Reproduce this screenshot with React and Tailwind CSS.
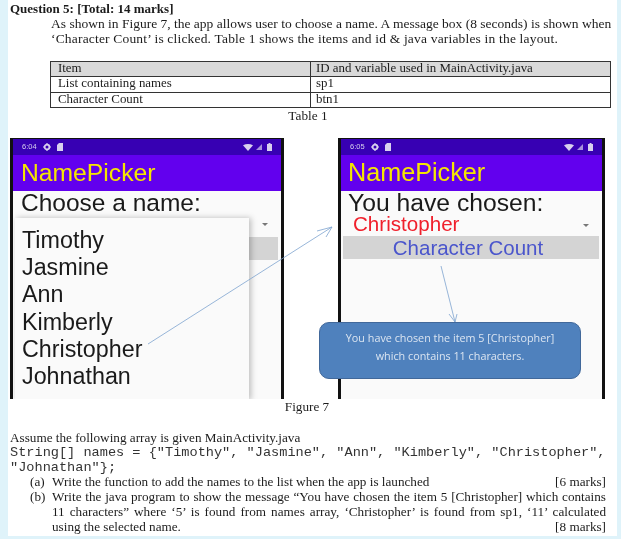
const serif = "font-['Liberation_Serif',serif]";
const sans = "font-['Liberation_Sans',Arial,sans-serif]";
const mono = "font-['Liberation_Mono',monospace]";
const justifyLine = "whitespace-nowrap text-justify [text-align-last:justify]";

const StatusBar = ({ time }) => (
  <div className="h-[16px] shrink-0 bg-[#3700b3] flex items-center justify-between pl-[9px] pr-[9px] text-[#d8d0ee]">
    <div className="flex items-center gap-[6px]">
      <span className={`${sans} text-[7.5px] leading-none`}>{time}</span>
      <svg width="8" height="8" viewBox="0 0 8 8">
        <circle cx="4" cy="4" r="2.4" fill="none" stroke="currentColor" strokeWidth="1.8" />
        <path d="M4 0v1.5M4 6.5V8M0 4h1.5M6.5 4H8" stroke="currentColor" strokeWidth="1.2" />
      </svg>
      <svg width="6" height="8" viewBox="0 0 6 8">
        <path d="M2 0h4v8H0V2z" fill="currentColor" />
      </svg>
    </div>
    <div className="flex items-center gap-[3px]">
      <svg width="10" height="7" viewBox="0 0 10 7">
        <path d="M0 1.2Q5-1.2 10 1.2L5 7z" fill="currentColor" />
      </svg>
      <svg width="6" height="6" viewBox="0 0 6 6">
        <path d="M6 0v6H0z" fill="currentColor" opacity="0.7" />
      </svg>
      <svg width="5" height="8" viewBox="0 0 5 8" className="ml-[2px]">
        <path d="M1.5 0h2v1H5v7H0V1h1.5z" fill="currentColor" />
      </svg>
    </div>
  </div>
);

const Phone = ({ time, titleClass, className, children }) => (
  <div className={`relative h-[261px] bg-[#fafafa] border-x-[3px] border-t border-[#111] flex flex-col overflow-hidden ${className}`}>
    <StatusBar time={time} />
    <div className={`h-[36px] shrink-0 bg-[#6200ee] text-[#f5e600] ${sans} ${titleClass} leading-[35px]`}>NamePicker</div>
    {children}
  </div>
);

const Caret = () => (
  <div className="w-0 h-0 border-x-[3px] border-t-[3px] border-x-transparent border-t-[#777]"></div>
);

export default function App() {
  return (
    <div className="w-[621px] h-[539px] bg-[#dff3fa] overflow-hidden">
      <div className={`relative ml-[8px] w-[609px] h-[536px] bg-white text-[#1c1c1c] blur-[0.35px] ${serif}`}>
        <div className="pl-[2px] pt-[2px] text-[13px] leading-[14px] font-bold">Question 5: [Total: 14 marks]</div>

        <div className="ml-[43px] w-[555px] text-[13.5px] leading-[15px]">
          <p className={justifyLine}>As shown in Figure 7, the app allows user to choose a name. A message box (8 seconds) is shown when</p>
          <p className="whitespace-nowrap tracking-[0.18px]">‘Character Count’ is clicked. Table 1 shows the items and id &amp; java variables in the layout.</p>
        </div>

        <table className="ml-[42px] mt-[15px] w-[561px] table-fixed border-collapse border border-[#333] text-[12.9px] leading-[13px]">
          <tbody>
            <tr className="bg-[#d9d9d9] h-[15px]">
              <td className="w-[260px] border border-[#333] px-[7px] py-0 align-top">Item</td>
              <td className="border border-[#333] px-[5px] py-0 align-top">ID and variable used in MainActivity.java</td>
            </tr>
            <tr className="h-[16px]">
              <td className="border border-[#333] px-[7px] py-0 align-top">List containing names</td>
              <td className="border border-[#333] px-[5px] py-0 align-top">sp1</td>
            </tr>
            <tr className="h-[15px]">
              <td className="border border-[#333] px-[7px] py-0 align-top">Character Count</td>
              <td className="border border-[#333] px-[5px] py-0 align-top">btn1</td>
            </tr>
          </tbody>
        </table>
        <div className="mr-[9px] text-center text-[13.3px] leading-[15px]">Table 1</div>

        {/* Figure 7 */}
        <div className="relative mt-[15px] h-[261px] flex">
          <Phone time="6:04" titleClass="text-[24.7px] pl-[8px]" className="ml-[2px] w-[274px]">
            <div className={`pl-[8px] ${sans} text-[24.5px] leading-[24px] text-[#1a1a1a]`}>Choose a name:</div>
            <div className="h-[22px] flex justify-end items-start pr-[13px] pt-[8px]">
              <Caret />
            </div>
            <div className="h-[23px] mx-[3px] bg-[#d4d4d4]"></div>
            <div className={`absolute left-[2px] top-[79px] w-[234px] h-[182px] bg-[#fafafa] shadow-[2px_0_6px_rgba(0,0,0,0.25)] pl-[7px] pt-[9px] ${sans} text-[23.3px] leading-[27.2px] text-[#1a1a1a]`}>
              <div>Timothy</div>
              <div>Jasmine</div>
              <div>Ann</div>
              <div>Kimberly</div>
              <div>Christopher</div>
              <div>Johnathan</div>
            </div>
          </Phone>
          <Phone time="6:05" titleClass="text-[25.2px] pl-[7px]" className="ml-[54px] w-[267px]">
            <div className={`pl-[7px] ${sans} text-[24.7px] leading-[24px] text-[#1a1a1a] whitespace-nowrap`}>You have chosen:</div>
            <div className="h-[21px] flex items-start justify-between pl-[12px] pr-[13px]">
              <span className={`${sans} text-[20.6px] leading-[17px] text-[#f0202c]`}>Christopher</span>
              <div className="pt-[9px]"><Caret /></div>
            </div>
            <div className={`h-[23px] ml-[2px] mr-[3px] pr-[6px] bg-[#d4d4d4] text-center text-[#4a55cc] ${sans} text-[20.5px] leading-[23px]`}>Character Count</div>
          </Phone>

          {/* Callout arrows */}
          <svg className="absolute left-0 top-0" width="609" height="261" fill="none" stroke="#7da3cf" strokeWidth="0.8">
            <path d="M140 206 L324 89 M309 93 L324 89 L318 99" />
            <path d="M433 128 L447 184 M441 176 L447 184 L449 176" />
          </svg>

          <div className="absolute left-[311px] top-[184px] w-[262px] h-[57px] rounded-[10px] bg-[#4f81bd] border border-[#41689a] flex flex-col items-center justify-center pb-[7px] font-['Open_Sans',sans-serif] text-[10.8px] leading-[18px] text-[#dbe5f1]">
            <div>You have chosen the item 5 [Christopher]</div>
            <div>which contains 11 characters.</div>
          </div>
        </div>

        <div className="mr-[11px] text-center text-[13.2px] leading-[14px] mt-[1px]">Figure 7</div>

        <div className="mt-[16px] pl-[2px] text-[13.2px] leading-[15px]">
          <div className="whitespace-nowrap">Assume the following array is given MainActivity.java</div>
          <div className={`${mono} text-[13.6px] leading-[15px] whitespace-nowrap text-[#333]`}>String[] names = {"{"}"Timothy", "Jasmine", "Ann", "Kimberly", "Christopher",</div>
          <div className={`${mono} text-[13.6px] leading-[15px] whitespace-nowrap text-[#333]`}>"Johnathan"{"}"};</div>
        </div>
        <div className="ml-[22px] -mt-[1px] w-[576px] text-[13.2px] leading-[15px]">
          <div className="flex">
            <span className="w-[22px] shrink-0">(a)</span>
            <span className="flex-1">Write the function to add the names to the list when the app is launched</span>
            <span>[6 marks]</span>
          </div>
          <div className="flex">
            <span className="w-[22px] shrink-0">(b)</span>
            <div className="flex-1 min-w-0">
              <div className={justifyLine}>Write the java program to show the message “You have chosen the item 5 [Christopher] which contains</div>
              <div className={justifyLine}>11 characters” where ‘5’ is found from names array, ‘Christopher’ is found from sp1, ‘11’ calculated</div>
              <div className="flex justify-between"><span>using the selected name.</span><span>[8 marks]</span></div>
            </div>
          </div>
        </div>
      </div>
    </div>
  );
}
